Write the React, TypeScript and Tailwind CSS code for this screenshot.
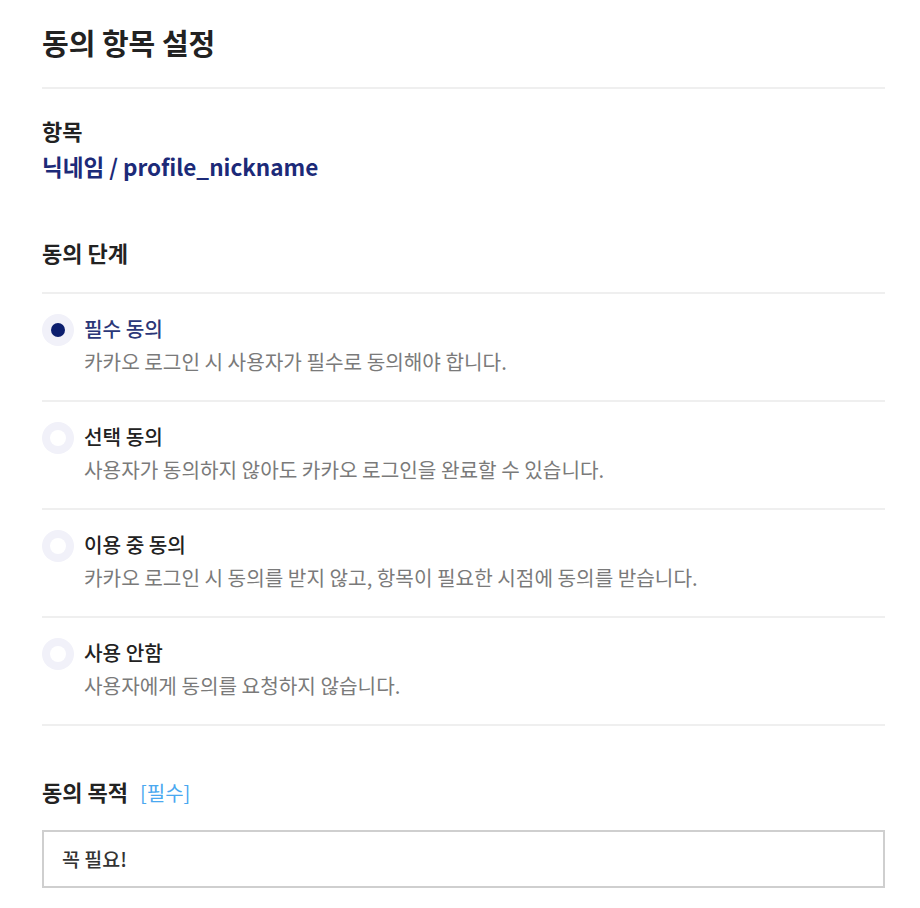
import React from "react";

const font = { fontFamily: '"Noto Sans CJK KR", "Noto Sans", sans-serif' };

function Radio({ checked }: { checked: boolean }) {
  return (
    <div className="w-[32px] h-[32px] rounded-full bg-[#f1f1f9] flex items-center justify-center shrink-0">
      {checked ? (
        <div className="w-[14px] h-[14px] rounded-full bg-[#0c1e6e]" />
      ) : (
        <div className="w-[16px] h-[16px] rounded-full bg-white" />
      )}
    </div>
  );
}

const options = [
  { title: "필수 동의", desc: "카카오 로그인 시 사용자가 필수로 동의해야 합니다.", checked: true },
  { title: "선택 동의", desc: "사용자가 동의하지 않아도 카카오 로그인을 완료할 수 있습니다.", checked: false },
  { title: "이용 중 동의", desc: "카카오 로그인 시 동의를 받지 않고, 항목이 필요한 시점에 동의를 받습니다.", checked: false },
  { title: "사용 안함", desc: "사용자에게 동의를 요청하지 않습니다.", checked: false },
];

export default function App() {
  return (
    <div className="w-[920px] h-[908px] bg-white pl-[42px] pr-[35px]" style={font}>
      <div className="pt-[22px] pb-[25px] border-b-2 border-[#efefef]">
        <h1 className="text-[29px] leading-[40px] font-bold text-[#222]">동의 항목 설정</h1>
      </div>
      <div className="pt-[26px]">
        <div className="text-[22px] leading-[30px] font-semibold text-[#222]">항목</div>
        <div className="mt-[4px] text-[22.5px] leading-[34px] font-semibold text-[#1c2a78]">닉네임 / profile_nickname</div>
      </div>
      <div className="mt-[54px] pb-[25px] border-b-2 border-[#efefef]">
        <div className="text-[22px] leading-[30px] font-semibold text-[#222]">동의 단계</div>
      </div>
      {options.map((o) => (
        <div key={o.title} className="flex gap-[10px] pt-[20px] h-[108px] border-b-2 border-[#efefef]">
          <div>
            <Radio checked={o.checked} />
          </div>
          <div className="flex flex-col">
            <div className={`text-[20.2px] leading-[30px] font-medium ${o.checked ? "text-[#2b3778]" : "text-[#222]"}`}>{o.title}</div>
            <div className="mt-[4px] text-[20.2px] leading-[28px] text-[#7a7a7a]">{o.desc}</div>
          </div>
        </div>
      ))}
      <div className="pt-[50px] flex items-baseline gap-[12px]">
        <span className="text-[22px] leading-[30px] font-semibold text-[#222]">동의 목적</span>
        <span className="text-[20px] leading-[30px] text-[#4aa8f0]">[필수]</span>
      </div>
      <div className="mt-[22px] h-[58px] border-2 border-[#cfcfcf] flex items-center px-[18px]">
        <span className="text-[19.5px] text-[#333] font-medium">꼭 필요!</span>
      </div>
    </div>
  );
}
